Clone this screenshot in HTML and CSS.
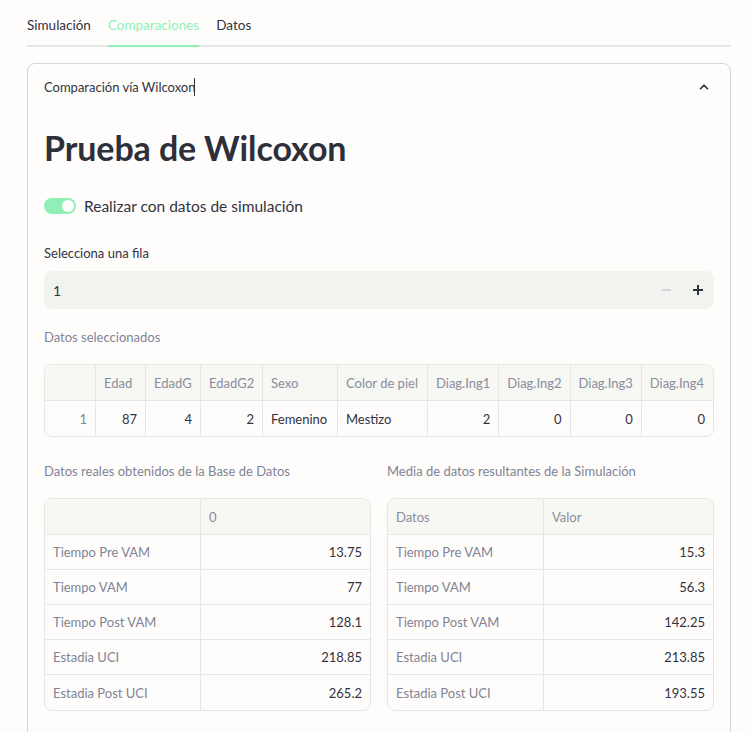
FILE: index.html
```html
<!DOCTYPE html>
<html lang="es">
<head>
<meta charset="utf-8">
<link rel="stylesheet" href="styles.css">
</head>
<body>
<div class="app">
  <div class="tabs">
    <div class="tab">Simulación</div>
    <div class="tab active">Comparaciones</div>
    <div class="tab">Datos</div>
  </div>
  <div class="expander">
    <div class="exp-head">
      <span class="exp-title">Comparación vía Wilcoxon<span class="caret"></span></span>
      <svg class="chev" width="14" height="14" viewBox="0 0 24 24"><path d="M6 15l6-6 6 6" fill="none" stroke="#31333f" stroke-width="3" stroke-linecap="round" stroke-linejoin="round"/></svg>
    </div>
    <div class="exp-body">
      <h1 class="title">Prueba de Wilcoxon</h1>
      <div class="toggle-row">
        <span class="toggle"><span class="knob"></span></span>
        <span class="toggle-label">Realizar con datos de simulación</span>
      </div>
      <div class="field-label">Selecciona una fila</div>
      <div class="num-input">
        <span class="num-val">1</span>
        <span class="step minus"></span>
        <span class="step plus"></span>
      </div>
      <div class="caption">Datos seleccionados</div>
      <table class="df wide">
        <thead>
          <tr><th class="c-idx"></th><th class="c-edad">Edad</th><th class="c-edadg">EdadG</th><th class="c-edadg2">EdadG2</th><th class="c-sexo">Sexo</th><th class="c-color">Color de piel</th><th class="c-diag">Diag.Ing1</th><th class="c-diag">Diag.Ing2</th><th class="c-diag">Diag.Ing3</th><th class="c-diag">Diag.Ing4</th></tr>
        </thead>
        <tbody>
          <tr><td class="idx num">1</td><td class="num">87</td><td class="num">4</td><td class="num">2</td><td>Femenino</td><td>Mestizo</td><td class="num">2</td><td class="num">0</td><td class="num">0</td><td class="num">0</td></tr>
        </tbody>
      </table>
      <div class="cols">
        <div class="col">
          <div class="caption">Datos reales obtenidos de la Base de Datos</div>
          <table class="df two">
            <thead><tr><th></th><th>0</th></tr></thead>
            <tbody>
              <tr><td class="idx">Tiempo Pre VAM</td><td class="num">13.75</td></tr>
              <tr><td class="idx">Tiempo VAM</td><td class="num">77</td></tr>
              <tr><td class="idx">Tiempo Post VAM</td><td class="num">128.1</td></tr>
              <tr><td class="idx">Estadia UCI</td><td class="num">218.85</td></tr>
              <tr><td class="idx">Estadia Post UCI</td><td class="num">265.2</td></tr>
            </tbody>
          </table>
        </div>
        <div class="col">
          <div class="caption">Media de datos resultantes de la Simulación</div>
          <table class="df two">
            <thead><tr><th>Datos</th><th>Valor</th></tr></thead>
            <tbody>
              <tr><td class="idx">Tiempo Pre VAM</td><td class="num">15.3</td></tr>
              <tr><td class="idx">Tiempo VAM</td><td class="num">56.3</td></tr>
              <tr><td class="idx">Tiempo Post VAM</td><td class="num">142.25</td></tr>
              <tr><td class="idx">Estadia UCI</td><td class="num">213.85</td></tr>
              <tr><td class="idx">Estadia Post UCI</td><td class="num">193.55</td></tr>
            </tbody>
          </table>
        </div>
      </div>
    </div>
  </div>
</div>
</body>
</html>
```
FILE: styles.css
```css
* { box-sizing: border-box; }
html, body { margin: 0; padding: 0; background: #fffdfb; }
body {
  font-family: Lato, "Open Sans", sans-serif;
  color: #31333f;
  height: 732px;
  overflow: hidden;
}
.app { padding: 0 20px 0 27px; }
.tabs {
  display: flex;
  gap: 17px;
  height: 47px;
  border-bottom: 2px solid #e6e6e6;
  padding-top: 15px;
}
.tab {
  font-size: 13.5px;
  height: 30px;
  line-height: 20px;
  color: #31333f;
}
.tab.active {
  color: #8ef0b5;
  border-bottom: 2px solid #8ef0b5;
  height: 32px;
}
.expander {
  margin-top: 16px;
  border: 1px solid #d6d6d8;
  border-radius: 8px;
  height: 700px;
}
.exp-head {
  display: flex;
  align-items: center;
  justify-content: space-between;
  height: 46px;
  padding: 0 19px 0 16px;
  font-size: 13px;
}
.exp-title { position: relative; }
.caret {
  display: inline-block;
  width: 1px;
  height: 18px;
  background: #31333f;
  vertical-align: -4px;
  margin-left: -1px;
}
.chev { display: block; }
.exp-body { padding: 0 16px 16px 16px; }
.title {
  margin: 16px 0 0 0;
  font-size: 34px;
  font-weight: 700;
  line-height: 44px;
  color: #2d2f3a;
  letter-spacing: -0.1px;
}
.toggle-row {
  display: flex;
  align-items: center;
  gap: 8px;
  margin-top: 26px;
  height: 20px;
}
.toggle {
  width: 32px;
  height: 16px;
  border-radius: 8px;
  background: #8ef0b5;
  display: flex;
  justify-content: flex-end;
  align-items: center;
  padding: 2px;
}
.knob {
  width: 12px;
  height: 12px;
  border-radius: 50%;
  background: #ffffff;
}
.toggle-label { font-size: 15.5px; color: #31333f; }
.field-label {
  margin-top: 27px;
  font-size: 13px;
  line-height: 20px;
}
.num-input {
  margin-top: 8px;
  height: 38px;
  background: #f1f3ef;
  border-radius: 8px;
  display: flex;
  align-items: center;
  padding-left: 9px;
}
.num-val { flex: 1; font-size: 14px; }
.step {
  width: 32px;
  height: 38px;
  position: relative;
}
.step::before, .step::after {
  content: "";
  position: absolute;
  left: 50%;
  top: 50%;
  background: #31333f;
}
.step::before { width: 10px; height: 2px; margin: -1px 0 0 -5px; }
.plus::after { width: 2px; height: 10px; margin: -5px 0 0 -1px; }
.minus::before { background: #d3d3dc; width: 9px; margin-left: -4px; }
.caption {
  margin-top: 18px;
  font-size: 13px;
  line-height: 20px;
  color: #808495;
}
.df {
  border-collapse: separate;
  border-spacing: 0;
  border: 1px solid #e6e6e4;
  border-radius: 8px;
  overflow: hidden;
  font-size: 13px;
  width: 100%;
  table-layout: fixed;
}
.wide { margin-top: 17px; }
.df th, .df td {
  border-right: 1px solid #e6e6e4;
  border-bottom: 1px solid #e6e6e4;
  padding: 0 8px;
  white-space: nowrap;
  overflow: hidden;
}
.df th:last-child, .df td:last-child { border-right: none; }
.df tbody tr:last-child td { border-bottom: none; }
.df th {
  height: 36px;
  background: #f7f7f4;
  color: #8a8d9c;
  font-weight: 400;
  text-align: left;
}
.df td { height: 35px; color: #31333f; }
.df td.num { text-align: right; }
.df td.idx { color: #808495; }
.c-idx { width: 51px; }
.c-edad { width: 50px; }
.c-edadg { width: 55px; }
.c-edadg2 { width: 62px; }
.c-sexo { width: 75px; }
.c-color { width: 90px; }
.cols {
  display: grid;
  grid-template-columns: 1fr 1fr;
  gap: 16px;
  margin-top: 24px;
}
.col .caption { margin-top: 0; }
.two { margin-top: 17px; }
.two th:first-child, .two td:first-child { width: 156px; }
```
